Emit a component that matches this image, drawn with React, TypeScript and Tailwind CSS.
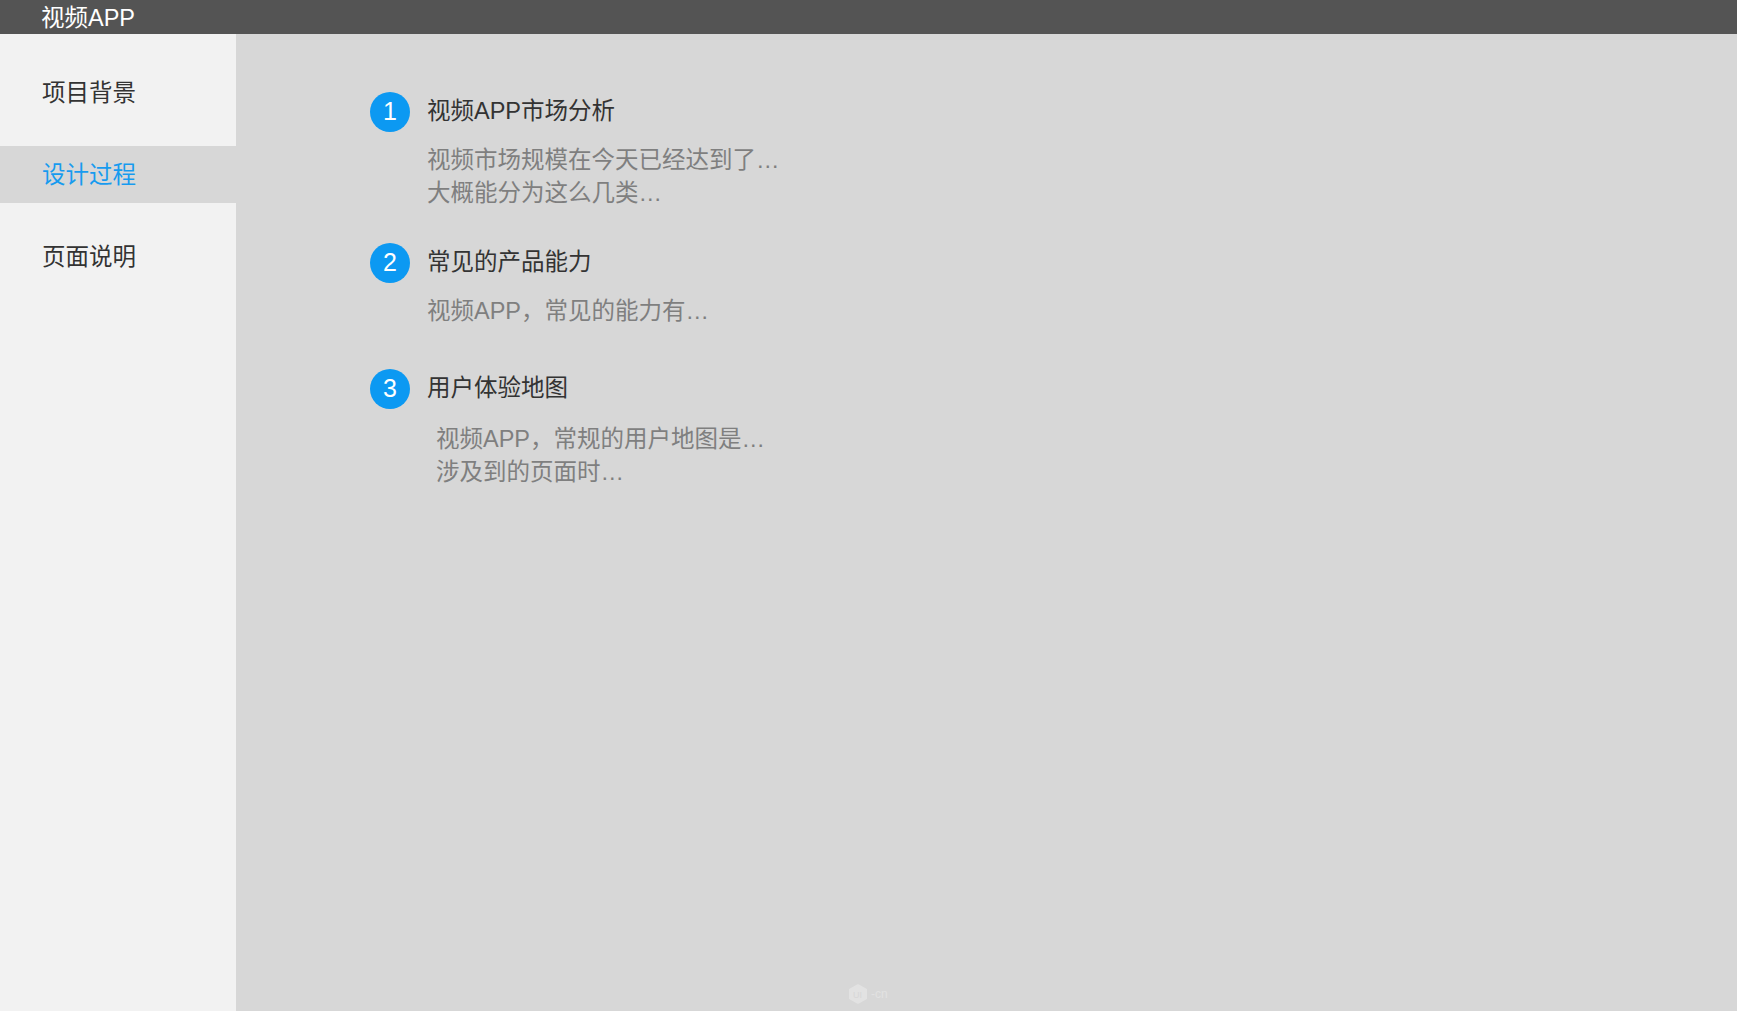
import React from 'react'

const navItems = [
  { label: '项目背景', h: 'h-[112px] pt-[8px]', active: false },
  { label: '设计过程', h: 'h-[57px] pt-[3px]', active: true },
  { label: '页面说明', h: 'h-[108px] pt-[2px]', active: false },
]

const steps = [
  {
    no: 1,
    title: '视频APP市场分析',
    lines: ['视频市场规模在今天已经达到了…', '大概能分为这么几类…'],
    gap: '',
    indent: 'pl-[57px] mt-[12px]',
  },
  {
    no: 2,
    title: '常见的产品能力',
    lines: ['视频APP，常见的能力有…'],
    gap: 'mt-[33px]',
    indent: 'pl-[57px] mt-[12px]',
  },
  {
    no: 3,
    title: '用户体验地图',
    lines: ['视频APP，常规的用户地图是…', '涉及到的页面时…'],
    gap: 'mt-[41px]',
    indent: 'pl-[66px] mt-[14px]',
  },
]

export default function App() {
  return (
    <div className="flex h-[1011px] w-full flex-col font-['Liberation_Sans','Noto_Sans_CJK_SC',sans-serif] text-[23.5px]">
      {/* top bar */}
      <header className="flex h-[34px] shrink-0 items-center bg-[#545454] pl-[41px] pt-[4px] leading-none text-white">
        视频APP
      </header>

      <div className="flex flex-1">
        <aside className="w-[236px] shrink-0 bg-[#f2f2f2]">
          {navItems.map((item) => (
            <div
              key={item.label}
              className={`flex items-center pl-[42px] ${item.h} ${
                item.active ? 'bg-[#d7d7d7] text-[#179bef]' : 'text-[#333333]'
              }`}
            >
              {item.label}
            </div>
          ))}
        </aside>

        <main className="relative flex-1 bg-[#d7d7d7] pl-[134px] pt-[58px]">
          {steps.map((s) => (
            <section key={s.no} className={s.gap}>
              <div className="flex items-center gap-[17px]">
                <span className="flex h-[40px] w-[40px] items-center justify-center rounded-full bg-[#0c99f2] text-[25px] text-white">
                  {s.no}
                </span>
                <span className="text-[#333333]">{s.title}</span>
              </div>
              <div className={`leading-[33px] text-[#7f7f7f] ${s.indent}`}>
                {s.lines.map((l) => (
                  <p key={l}>{l}</p>
                ))}
              </div>
            </section>
          ))}

          {/* faint watermark */}
          <div className="absolute bottom-[6px] left-[612px] flex items-center gap-[3px] text-[12px] text-[#e2e2e2]">
            <svg width="20" height="22" viewBox="0 0 20 22">
              <path d="M10 1 L19 6 L19 16 L10 21 L1 16 L1 6 Z" fill="#e2e2e2" />
              <text x="5" y="15" fontSize="9" fill="#d7d7d7" fontFamily="Liberation Sans">UI</text>
            </svg>
            <span>-cn</span>
          </div>
        </main>
      </div>
    </div>
  )
}
